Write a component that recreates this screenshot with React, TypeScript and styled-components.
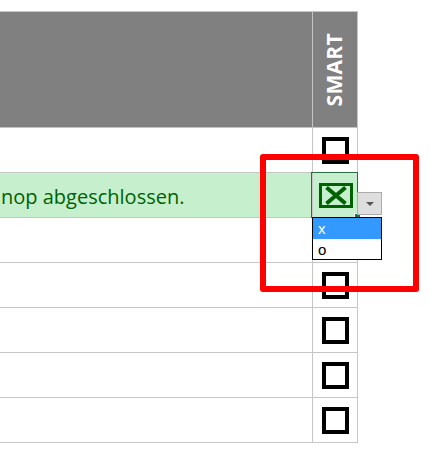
import styled, { createGlobalStyle } from 'styled-components';

const GlobalStyle = createGlobalStyle`
  body {
    margin: 0;
    background: #fff;
    font-family: 'Open Sans', 'Liberation Sans', sans-serif;
  }
`;

const Page = styled.div`
  position: relative;
  width: 430px;
  height: 465px;
  padding-top: 11px;
  box-sizing: border-box;
  overflow: hidden;
`;

const Sheet = styled.div`
  display: grid;
  grid-template-columns: 313px 45px;
  border-top: 1px solid #c6c6c6;
  width: 358px;
`;

const HeaderCell = styled.div`
  height: 116px;
  box-sizing: border-box;
  background: #808080;
  border-right: 1px solid #c3c3c3;
  border-bottom: 1px solid #c3c3c3;
  display: flex;
  justify-content: center;
  align-items: flex-start;
`;

const HeaderLabel = styled.span`
  writing-mode: vertical-rl;
  transform: rotate(180deg);
  margin-top: 21px;
  margin-left: -1px;
  color: #fff;
  font-weight: 700;
  font-size: 21px;
  line-height: 1;
  letter-spacing: 0.3px;
`;

const Cell = styled.div<{ $done?: boolean }>`
  position: relative;
  height: 45px;
  box-sizing: border-box;
  border-right: 1px solid #c6c6c6;
  border-bottom: 1px solid #c6c6c6;
  background: ${(p) => (p.$done ? '#c6efce' : '#fff')};
  display: flex;
  align-items: center;
`;

const TextCell = styled(Cell)`
  padding-left: 1px;
  padding-top: 3px;
  font-size: 20px;
  color: #006100;
  white-space: nowrap;
  overflow: hidden;
`;

const BoxCell = styled(Cell)`
  justify-content: center;
`;

const EmptyBox = styled.div`
  width: 27px;
  height: 27px;
  box-sizing: border-box;
  border: 4px solid #000;
  margin-left: 1px;
`;

const CheckedBox = styled.div`
  width: 34px;
  height: 25px;
  box-sizing: border-box;
  border: 3px solid #006100;
  display: flex;
  align-items: center;
  justify-content: center;
  margin-left: 1px;
`;

// selection frame around the active cell
const ActiveFrame = styled.div`
  position: absolute;
  left: -2px;
  top: -1px;
  right: -1px;
  bottom: -1px;
  border: 1.5px solid #2b6e44;
  pointer-events: none;
`;

const FillHandle = styled.div`
  position: absolute;
  right: -4px;
  bottom: -3px;
  width: 5px;
  height: 5px;
  background: #217346;
  border: 1px solid #fff;
`;

const DropButton = styled.div`
  position: absolute;
  left: 44px;
  top: 19px;
  width: 25px;
  height: 23px;
  box-sizing: border-box;
  background: #dedede;
  border: 1px solid #acacac;
  display: flex;
  align-items: center;
  justify-content: center;

  &::after {
    content: '';
    border-left: 4px solid transparent;
    border-right: 4px solid transparent;
    border-top: 4px solid #555;
    margin-top: 1px;
  }
`;

const DropList = styled.div`
  position: absolute;
  left: -1px;
  top: 44px;
  width: 70px;
  height: 43px;
  box-sizing: border-box;
  background: #fff;
  border: 1px solid #000;
  z-index: 2;
`;

const DropItem = styled.div<{ $selected?: boolean }>`
  height: 21px;
  padding-left: 5px;
  font-family: 'Liberation Sans', Arial, sans-serif;
  font-size: 15px;
  line-height: 22px;
  background: ${(p) => (p.$selected ? '#3399ff' : 'transparent')};
  color: ${(p) => (p.$selected ? '#fff' : '#000')};
`;

const Marker = styled.div`
  position: absolute;
  left: 260px;
  top: 154px;
  width: 159px;
  height: 138px;
  box-sizing: border-box;
  border: 6px solid #ff0000;
  border-radius: 3px;
  z-index: 3;
  pointer-events: none;
`;

const rows = [
  { text: '', done: false, active: false },
  { text: 'nop abgeschlossen.', done: true, active: true },
  { text: '', done: false, active: false },
  { text: '', done: false, active: false },
  { text: '', done: false, active: false },
  { text: '', done: false, active: false },
  { text: '', done: false, active: false },
];

function CrossMark() {
  return (
    <svg width="28" height="19" viewBox="0 0 28 19">
      <path d="M4.5 1.5 L23.5 17.5 M23.5 1.5 L4.5 17.5" stroke="#006100" strokeWidth="4" fill="none" />
    </svg>
  );
}

export default function App() {
  return (
    <>
      <GlobalStyle />
      <Page>
        <Sheet>
          <HeaderCell />
          <HeaderCell>
            <HeaderLabel>SMART</HeaderLabel>
          </HeaderCell>

          {rows.map((row, i) => (
            <div key={i} style={{ display: 'contents' }}>
              <TextCell $done={row.done}>{row.text}</TextCell>
              <BoxCell $done={row.done}>
                {row.done ? (
                  <CheckedBox>
                    <CrossMark />
                  </CheckedBox>
                ) : (
                  <EmptyBox />
                )}
                {row.active && (
                  <>
                    <ActiveFrame />
                    <FillHandle />
                    <DropButton />
                    <DropList>
                      <DropItem $selected>x</DropItem>
                      <DropItem>o</DropItem>
                    </DropList>
                  </>
                )}
              </BoxCell>
            </div>
          ))}
        </Sheet>
        <Marker />
      </Page>
    </>
  );
}
